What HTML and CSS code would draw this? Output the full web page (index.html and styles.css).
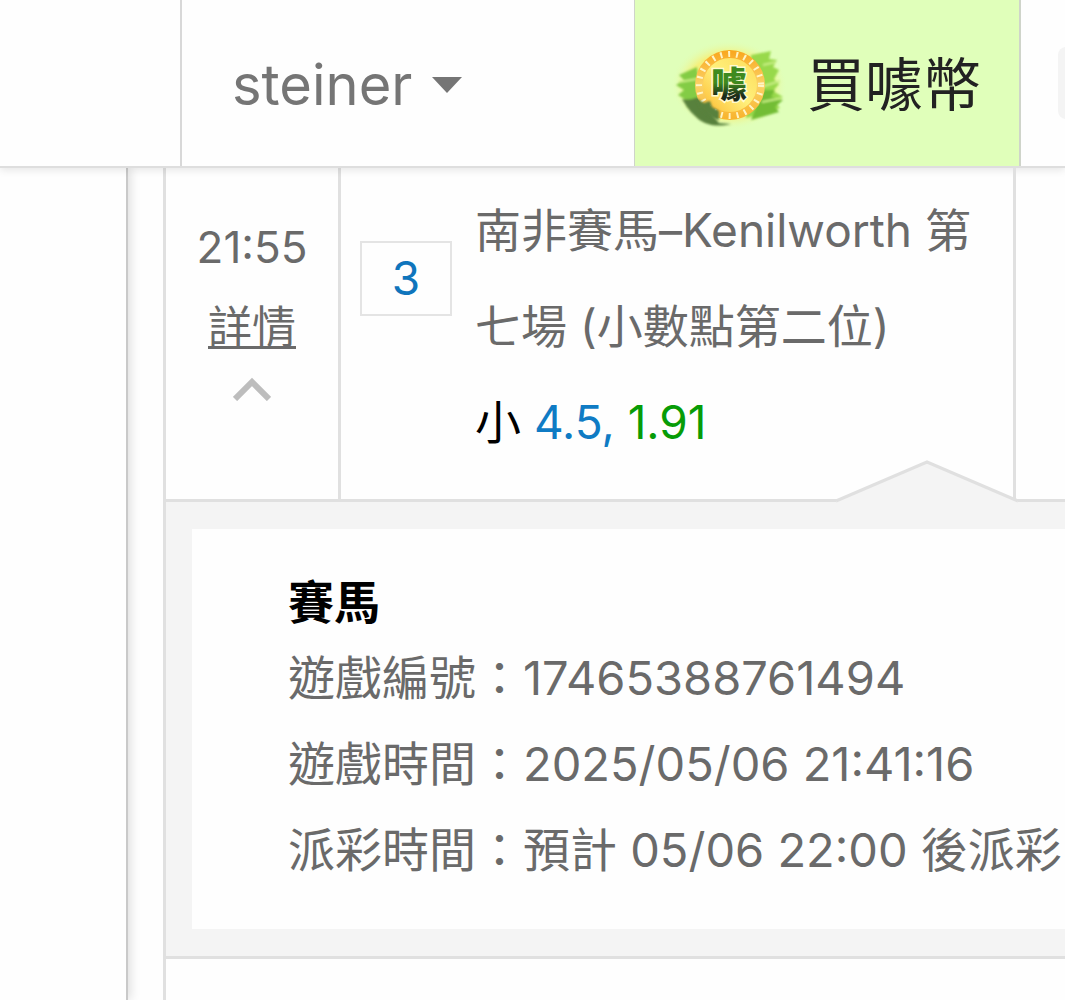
FILE: index.html
```html
<!DOCTYPE html>
<html lang="zh-Hant">
<head>
  <meta charset="UTF-8" />
  <meta name="viewport" content="width=device-width, initial-scale=1" />
  <title>投注記錄</title>
  <link rel="stylesheet" href="styles.css">
</head>
<body>
  <header class="topbar">
    <div class="topbar-logo"></div>
    <button class="user-menu" type="button">
      steiner
      <svg class="caret" viewBox="0 0 30 16" aria-hidden="true"><path d="M0 0h30L15 16z" /></svg>
    </button>
    <a class="buy" href="#">
      <svg class="coin" viewBox="0 -3 120 96" aria-hidden="true">
        <defs>
          <radialGradient id="glow">
            <stop offset="0.7" stop-color="#f5f07c" />
            <stop offset="1" stop-color="#e0ffba" stop-opacity="0" />
          </radialGradient>
          <linearGradient id="rim" x1="0" y1="0" x2="0" y2="1">
            <stop offset="0" stop-color="#f9a61c" />
            <stop offset="0.5" stop-color="#fbd267" />
            <stop offset="1" stop-color="#f8b32c" />
          </linearGradient>
          <linearGradient id="face" x1="0" y1="1" x2="1" y2="0">
            <stop offset="0" stop-color="#fdb92f" />
            <stop offset="0.5" stop-color="#fff07c" />
            <stop offset="1" stop-color="#fddb58" />
          </linearGradient>
          <linearGradient id="ink" x1="0" y1="0" x2="0" y2="1">
            <stop offset="0.45" stop-color="#3f8a1e" />
            <stop offset="0.75" stop-color="#1c2b1a" />
          </linearGradient>
          <filter id="soft"><feGaussianBlur stdDeviation="0.9" /></filter>
        </defs>
        <ellipse cx="60" cy="47" rx="58" ry="45" fill="url(#glow)" />
        <g filter="url(#soft)">
          <path d="M82 17l20-4-2 8 8 1-4 7 6 3-5 9 5 5-6 7 10 6-9 4 6 7-16 5-18 5z" fill="#98d94c" />
          <path d="M94 52l12 0-4 7 12 3-8 7 4 5-28 8z" fill="#73bd35" />
          <path d="M94 27l13-3M92 49l19-6M93 64l20-4" stroke="#c9ef84" stroke-width="2" />
          <path d="M28 29l-18 8 5 5-8 5 8 5-6 5 11 7-3 5 16 4z" fill="#83cc45" />
          <path d="M10 44l18-3" stroke="#c9ef84" stroke-width="2" />
          <path d="M13 61c10 2 13-2 17-1l20 25 12 1c-16 4-29 0-36-8-6-5-10-12-13-17z" fill="#58813e" />
        </g>
        <circle cx="61" cy="47" r="35" fill="url(#rim)" />
        <circle cx="61" cy="47" r="31" fill="none" stroke="#fff5c5" stroke-width="6" stroke-dasharray="2 6" />
        <circle cx="61" cy="47" r="27" fill="url(#face)" />
        <path d="M27 60l8 5 6-2 2 6 7 4v9c-12-3-20-11-23-22z" fill="#58813e" filter="url(#soft)" />
        <text class="coin-text" x="60" y="60" text-anchor="middle">噱</text>
      </svg>
      <span>買噱幣</span>
    </a>
    <div class="topbar-tools"><span class="tool"></span></div>
  </header>

  <div class="page">
    <aside class="side"></aside>
    <main class="content">
      <table class="records">
        <colgroup>
          <col class="col-time">
          <col class="col-bet">
          <col>
        </colgroup>
        <tbody>
          <tr>
            <td class="time">
              <div>21:55</div>
              <a class="more" href="#detail">詳情</a>
              <svg class="chevron" viewBox="0 0 38 24" aria-hidden="true"><path d="M2 22L19 5l17 17" /></svg>
            </td>
            <td class="bet">
              <div class="bet-row">
                <span class="no">3</span>
                <div class="game">
                  <div>南非賽馬–Kenilworth 第七場 (小數點第二位)</div>
                  <div class="pick">小 <span class="line">4.5,</span> <span class="odds">1.91</span></div>
                </div>
              </div>
              <svg class="arrow" viewBox="0 0 182 43" aria-hidden="true">
                <path class="arrow-fill" d="M0 43v-2L91 2l91 39v2z" />
                <path class="arrow-line" d="M0 41L91 2l91 39" />
              </svg>
            </td>
            <td></td>
          </tr>
          <tr>
            <td class="detail" id="detail" colspan="3">
              <div class="detail-box">
                <h2>賽馬</h2>
                <p>遊戲編號：17465388761494</p>
                <p>遊戲時間：2025/05/06 21:41:16</p>
                <p>派彩時間：預計 05/06 22:00 後派彩</p>
              </div>
            </td>
          </tr>
          <tr>
            <td class="next" colspan="3"></td>
          </tr>
        </tbody>
      </table>
    </main>
  </div>
</body>
</html>
```
FILE: styles.css
```css
* {
  box-sizing: border-box;
}
body {
  margin: 0;
  font-family: Inter, "Noto Sans CJK TC", sans-serif;
  font-size: 46px;
  color: #6a6a6a;
  background: #fefefe;
  overflow: hidden;
}
a {
  color: inherit;
}

/* top bar */
.topbar {
  position: relative;
  display: flex;
  height: 168px;
  background: #fefefe;
  border-bottom: 2px solid #dedede;
  box-shadow: 0 2px 8px rgba(0,0,0,0.1);
}
.topbar-logo {
  width: 182px;
  border-right: 2px solid #d8d8d8;
}
.user-menu {
  display: flex;
  align-items: center;
  gap: 20px;
  flex: 1;
  padding: 4px 50px 0;
  border: none;
  background: none;
  color: #757575;
  font-family: inherit;
  font-size: 56px;
  cursor: pointer;
}
.caret {
  width: 30px;
  height: 16px;
  fill: #757575;
}
.buy {
  display: flex;
  align-items: center;
  gap: 18px;
  width: 387px;
  padding-left: 34px;
  border: solid #cfd4ca;
  border-width: 0 2px 0 1px;
  background: #e0ffba;
  color: #222;
  font-size: 58px;
  text-decoration: none;
  white-space: nowrap;
}
.buy span {
  padding-bottom: 4px;
}
.coin {
  width: 120px;
  height: 96px;
}
.coin-text {
  font-size: 36px;
  font-weight: 900;
  fill: url(#ink);
  stroke: #fffbd0;
  stroke-width: 3px;
  paint-order: stroke;
}
.topbar-tools {
  display: flex;
  align-items: center;
  width: 44px;
  padding-left: 37px;
  overflow: hidden;
}
.tool {
  flex: none;
  width: 72px;
  height: 72px;
  border-radius: 8px;
  background: #f4f4f4;
}

/* records */
.page {
  display: flex;
  min-height: calc(100vh - 168px);
}
.side {
  width: 128px;
  border-right: 2px solid #c9c9c9;
  box-shadow: 2px 0 10px rgba(0,0,0,0.14);
}
.content {
  flex: 1;
  min-width: 0;
  display: flex;
  padding-left: 35px;
}
.records {
  width: 100%;
  table-layout: fixed;
  border-spacing: 0;
  border-left: 3px solid #e0e0e0;
}
.col-time {
  width: 175px;
}
.col-bet {
  width: 675px;
}
.records td {
  padding: 0;
  vertical-align: top;
  border-bottom: 3px solid #e0e0e0;
}
.records .time {
  padding-top: 39px;
  border-right: 3px solid #e0e0e0;
  line-height: 80px;
  text-align: center;
}
.time div {
  font-size: 44px;
}
.more {
  display: block;
  font-size: 44px;
  text-underline-offset: 3px;
  text-decoration-thickness: 3px;
}
.chevron {
  display: block;
  width: 38px;
  height: 24px;
  margin: 10px auto 0;
  fill: none;
  stroke: #bdbdbd;
  stroke-width: 6;
}
.records .bet {
  position: relative;
  padding: 14px 24px 29px 19px;
  border-right: 3px solid #e0e0e0;
}
.bet-row {
  display: flex;
  align-items: flex-start;
  gap: 23px;
}
.no {
  flex: none;
  width: 92px;
  margin-top: 59px;
  border: 2px solid #e4e4e4;
  color: #0f75bc;
  line-height: 71px;
  text-align: center;
}
.game {
  line-height: 96px;
}
.pick {
  color: #000;
}
.line {
  color: #0f7bc4;
}
.odds {
  color: #079c07;
}
.arrow {
  position: absolute;
  right: -5px;
  bottom: -4px;
  width: 182px;
  height: 43px;
}
.arrow-fill {
  fill: #f4f4f4;
}
.arrow-line {
  fill: none;
  stroke: #e0e0e0;
  stroke-width: 3;
}
.records .detail {
  padding: 27px 0 27px 26px;
  background: #f4f4f4;
}
.detail-box {
  padding: 40px 0 36px 96px;
  background: #fefefe;
  white-space: nowrap;
  overflow: hidden;
}
.detail-box h2 {
  margin: 0;
  color: #000;
  font-size: 46px;
  line-height: 66px;
}
.detail-box p {
  margin: 0;
  font-size: 47px;
  line-height: 86px;
}
.records .next {
  height: 41px;
  border-bottom: none;
}
```
